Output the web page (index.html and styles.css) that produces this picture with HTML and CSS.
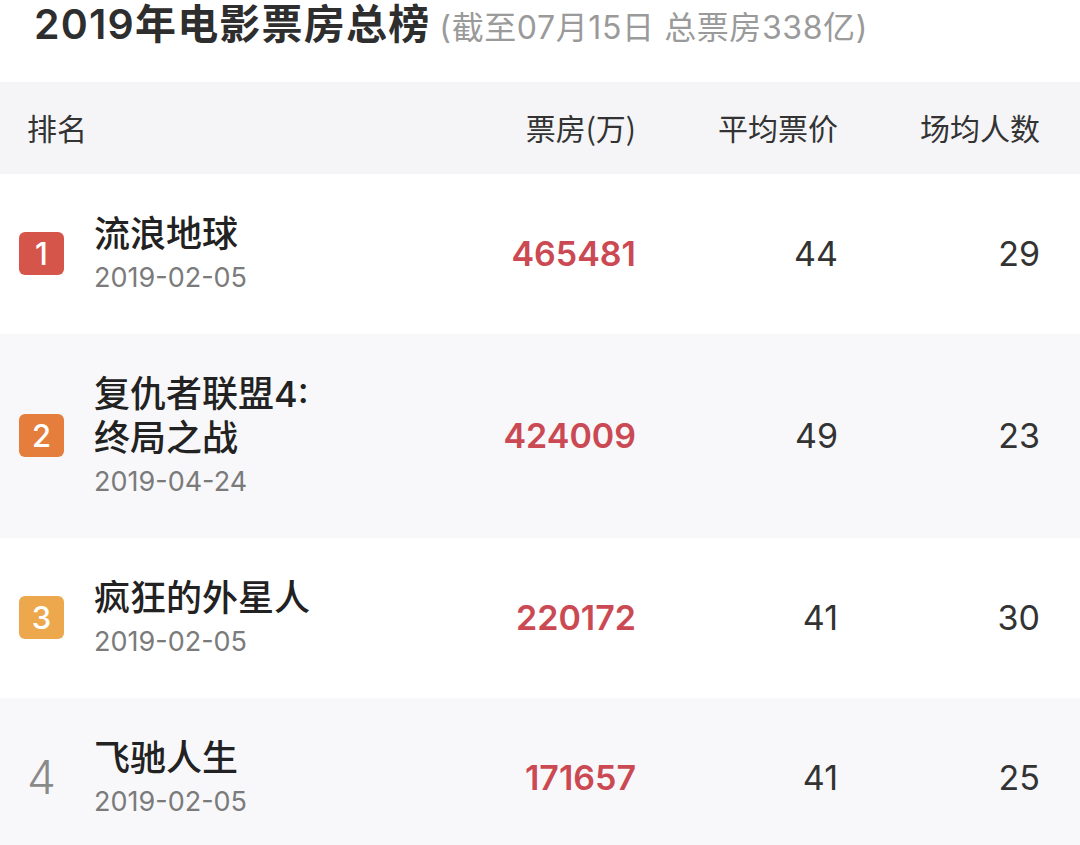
FILE: index.html
```html
<!DOCTYPE html>
<html lang="zh-CN">
<head>
<meta charset="utf-8">
<title>2019年电影票房总榜</title>
<link rel="stylesheet" href="styles.css">
</head>
<body>
<div class="page">
  <h1 class="title"><span class="main">2019年电影票房总榜</span><span class="sub">(截至07月15日 总票房338亿)</span></h1>
  <div class="table">
    <div class="row head">
      <div class="h-rank">排名</div>
      <div class="num h-box">票房(万)</div>
      <div class="num">平均票价</div>
      <div class="num">场均人数</div>
    </div>
    <div class="row">
      <div class="rank"><span class="badge b1">1</span></div>
      <div class="film"><div class="name">流浪地球</div><div class="date">2019-02-05</div></div>
      <div class="num box">465481</div>
      <div class="num val">44</div>
      <div class="num val">29</div>
    </div>
    <div class="row alt">
      <div class="rank"><span class="badge b2">2</span></div>
      <div class="film"><div class="name">复仇者联盟4:<br>终局之战</div><div class="date">2019-04-24</div></div>
      <div class="num box">424009</div>
      <div class="num val">49</div>
      <div class="num val">23</div>
    </div>
    <div class="row">
      <div class="rank"><span class="badge b3">3</span></div>
      <div class="film"><div class="name">疯狂的外星人</div><div class="date">2019-02-05</div></div>
      <div class="num box">220172</div>
      <div class="num val">41</div>
      <div class="num val">30</div>
    </div>
    <div class="row alt">
      <div class="rank"><span class="plain">4</span></div>
      <div class="film"><div class="name">飞驰人生</div><div class="date">2019-02-05</div></div>
      <div class="num box">171657</div>
      <div class="num val">41</div>
      <div class="num val">25</div>
    </div>
  </div>
</div>
</body>
</html>
```
FILE: styles.css
```css
html, body {
  margin: 0;
  padding: 0;
  background: #ffffff;
}
body {
  font-family: "Inter", "Noto Sans CJK SC", sans-serif;
  color: #222;
  width: 1080px;
  height: 845px;
  overflow: hidden;
}
.page {
  width: 1080px;
}
.title {
  margin: 0;
  height: 82px;
  box-sizing: border-box;
  padding: 0 0 0 34px;
  display: flex;
  align-items: baseline;
  line-height: 48px;
}
.title .main {
  font-size: 41px;
  font-weight: 600;
  letter-spacing: 1.2px;
  color: #2e2e2e;
}
.title .sub {
  font-size: 32px;
  font-weight: 400;
  letter-spacing: 0.6px;
  color: #9a9a9a;
  margin-left: 9px;
}
.row {
  display: grid;
  grid-template-columns: 94px 1fr 200px 202px 202px;
  align-items: center;
  padding: 38px 40px 34px 0;
  background: #fff;
}
.row.alt {
  background: #f8f8fa;
}
.row.head {
  background: #f5f5f7;
  height: 92px;
  box-sizing: border-box;
  padding-top: 0;
  padding-bottom: 2px;
  font-family: "Noto Sans CJK SC", sans-serif;
  font-size: 30px;
  color: #333;
}
.h-rank {
  grid-column: 1 / span 2;
  padding-left: 27px;
}
.num {
  text-align: right;
}
.row .rank,
.row .box,
.row .val {
  margin-bottom: 6px;
}
.rank {
  padding-left: 19px;
  display: flex;
}
.badge {
  width: 45px;
  height: 43px;
  border-radius: 6px;
  color: #fff;
  font-size: 31px;
  font-weight: 500;
  display: flex;
  align-items: center;
  justify-content: center;
}
.b1 { background: #d6554b; }
.b2 { background: #e57d3d; }
.b3 { background: #eda84d; }
.plain {
  width: 45px;
  text-align: center;
  font-size: 46px;
  font-weight: 300;
  color: #8a8a8a;
  line-height: 44px;
}
.name {
  font-size: 36px;
  font-weight: 500;
  line-height: 44px;
  color: #222;
}
.date {
  font-size: 27px;
  line-height: 44px;
  color: #7b7b7b;
}
.box {
  font-size: 34px;
  font-weight: 600;
  color: #cb4953;
}
.val {
  font-size: 34px;
  font-weight: 400;
  color: #333;
}
```
